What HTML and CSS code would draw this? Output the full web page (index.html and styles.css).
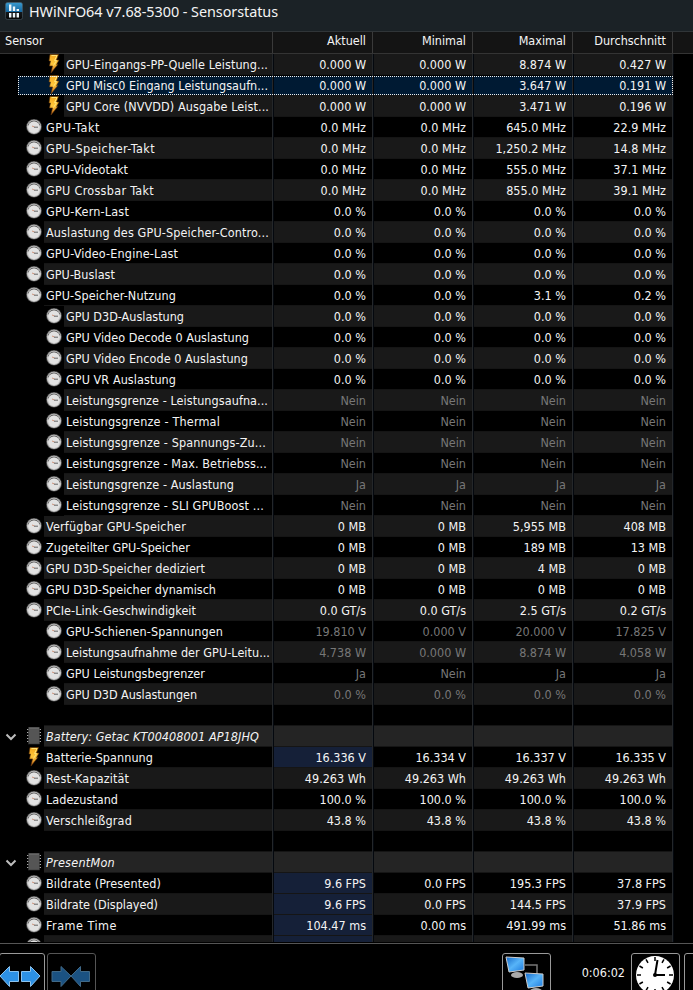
FILE: index.html
```html
<!DOCTYPE html>
<html lang="de">
<head>
<meta charset="utf-8">
<title>HWiNFO64 v7.68-5300 - Sensorstatus</title>
<link rel="stylesheet" href="styles.css">
</head>
<body>
<svg class="defs" width="0" height="0" aria-hidden="true">
  <defs>
    <linearGradient id="gold" x1="0" y1="0" x2="0" y2="1"><stop offset="0" stop-color="#f4a81c"/><stop offset=".5" stop-color="#ffc83c"/><stop offset="1" stop-color="#c8681c"/></linearGradient>
    <linearGradient id="screen" x1="0" y1="0" x2="1" y2="1"><stop offset="0" stop-color="#1568c8"/><stop offset=".5" stop-color="#57b4f8"/><stop offset="1" stop-color="#1c78dc"/></linearGradient>
    <linearGradient id="logo" x1="0" y1="0" x2="0" y2="1"><stop offset="0" stop-color="#3a9bd0"/><stop offset=".55" stop-color="#1467a0"/><stop offset=".56" stop-color="#15191c"/><stop offset="1" stop-color="#050505"/></linearGradient>
    <symbol id="bolt" viewBox="0 0 20 20"><path d="M6 0.500H14.500L12.500 6H15L12.500 10.500H13.800L7 19L8.500 12H5.500L6.500 7H5Z" fill="url(#gold)" stroke="#5c300a" stroke-width=".6"/><path d="M7.500 1.500H13L10.500 6.500H12.500L9.500 11.500" fill="none" stroke="#ffe478" stroke-width="1"/></symbol>
    <symbol id="gauge" viewBox="0 0 20 20"><circle cx="10" cy="9.800" r="7.800" fill="#555"/><circle cx="10" cy="9.800" r="7.100" fill="#c4c4c4"/><path d="M4.300 8.500A5.900 5.900 0 0 1 15.700 8.500" fill="none" stroke="#555" stroke-width="1"/><circle cx="10" cy="10.300" r="5.700" fill="#e2e2e2"/><path d="M8 9L10.500 10" stroke="#c98b72" stroke-width=".9"/><path d="M10 10.200H14" stroke="#666" stroke-width="1"/></symbol>
    <symbol id="chip" viewBox="0 0 20 20"><path d="M3 3.500H17M3 6.500H17M3 9.500H17M3 12.500H17M3 15.500H17" stroke="#aaa" stroke-width="1.200"/><rect x="4.500" y="1.500" width="11" height="16.500" fill="#555" stroke="#333" stroke-width=".6"/><path d="M5 2H15" stroke="#777" stroke-width="1"/></symbol>
    <symbol id="chevron" viewBox="0 0 12 8"><path d="M1.500 1.500L6 6L10.500 1.500" fill="none" stroke="#bdbdbd" stroke-width="2"/></symbol>
  </defs>
</svg>
<div class="window">
  <header class="titlebar">
    <svg class="logo" viewBox="0 0 18 18"><rect x=".5" y=".5" width="17" height="17" rx="2" fill="url(#logo)" stroke="#4b5c66" stroke-width=".6"/><path d="M5.200 2.500V9M9 4.500V9M12.800 7V9M5.200 11V15.500M9 11V15.500M12.800 11V15.500" stroke="#eef6fa" stroke-width="2.400"/></svg>
    <h1>HWiNFO64 v7.68-5300 - Sensorstatus</h1>
  </header>
  <div class="columns"><span>Sensor</span><span>Aktuell</span><span>Minimal</span><span>Maximal</span><span>Durchschnitt</span></div>
  <main class="rows" id="rows"></main>
  <footer class="toolbar">
    <div class="tool expand"><svg viewBox="0 0 44 40" width="44" height="40"><path d="M0 22L9.500 12.500V17.500H18.500V27.500H9.500V32.500ZM40 22L30.500 12.500V17.500H21.500V27.500H30.500V32.500Z" fill="#2d91e4" stroke="#8cc3ee"/></svg></div>
    <div class="tool collapse"><svg viewBox="0 0 44 40" width="44" height="40"><path d="M23 22L13 12.500V17.500H4V27.500H13V32.500ZM23 22L32.500 12.500V17.500H41.500V27.500H32.500V32.500Z" fill="#1b5282" stroke="#416987"/></svg></div>
    <div class="tool network"><svg viewBox="0 0 46 40" width="46" height="40"><path d="M22 11H34V21" fill="none" stroke="#777" stroke-width="1.500"/><ellipse cx="14" cy="21" rx="6" ry="3" fill="#aaa"/><path d="M3 3L21 4V16L6 18Z" fill="url(#screen)" stroke="#ccc"/><ellipse cx="33" cy="37" rx="6" ry="3" fill="#aaa"/><path d="M22 19L40 20V32L25 34Z" fill="url(#screen)" stroke="#ccc"/></svg></div>
    <time>0:06:02</time>
    <div class="tool clock"><svg viewBox="0 0 46 40" width="46" height="40"><circle cx="23" cy="21" r="19" fill="#fff"/><g id="ticks" stroke="#000" stroke-width="1.500"></g><path d="M23 21L25.500 6M22 21H33" stroke="#000" stroke-width="2"/><circle cx="23" cy="21" r="2"/></svg></div>
    <div class="tool next"></div>
  </footer>
</div>
<script src="app.js"></script>
</body>
</html>
```
FILE: styles.css
```css
* { box-sizing: border-box; }
body { margin: 0; background: #000; color: #f4f4f4; font: 12.5px/20px "DejaVu Sans Condensed", "DejaVu Sans", sans-serif; font-stretch: condensed; }
.defs { position: absolute; }
.window { width: 693px; height: 990px; overflow: hidden; display: flex; flex-direction: column; }
.titlebar { height: 32px; flex: none; display: flex; background: #1b2226; border-bottom: 1px solid #303538; padding: 2px 0 0 5px; }
.logo { width: 18px; height: 18px; margin-right: 6px; }
h1 { margin: 0; font: 14.4px/20px "Noto Sans", sans-serif; letter-spacing: -0.05px; white-space: nowrap; }
.columns { height: 22px; flex: none; display: grid; grid-template-columns: 273px repeat(4, 100px) 1fr; background: #141414; border-bottom: 1px solid #343434; line-height: 18px; }
.columns span { border-right: 1px solid #3a3a3a; padding-right: 6px; text-align: right; }
.columns span:first-child { text-align: left; padding-left: 5px; }
.rows { height: 888px; flex: none; overflow: hidden; }
.row { height: 21px; width: 674px; display: grid; grid-template-columns: 274px repeat(4, 100px); }
.row > * { border-right: 2px solid; border-image: linear-gradient(to right, transparent calc(100% - 2px), #24272a calc(100% - 2px), #24272a calc(100% - 1px), #04080e calc(100% - 1px)) 0 2 0 0; height: 21px; }
.name { display: flex; min-width: 0; padding-left: 24px; }
.nested .name { padding-left: 44px; }
.icon { width: 20px; height: 20px; flex: none; }
.label { flex: 1; min-width: 0; padding-left: 2px; white-space: nowrap; }
.label, .value { line-height: 21px; box-shadow: inset 0 -1px #151515; }
.value { text-align: right; padding-right: 6px; }
.stripe .label, .stripe .value { background: #191919; }
.muted .value { color: #777; }
.group .label, .group .value { background: #242424; }
.group .label { font-style: italic; }
.group .name { padding-left: 5px; }
.chevron { width: 12px; height: 8px; margin: 7px 7px 0 0; flex: none; }
.row.live .value:nth-child(2) { background: #152038; }
.selected { position: relative; background: linear-gradient(#001a33, #001a33) 18px 1px / 655px 19px no-repeat; }
.selected::after { content: ""; box-sizing: border-box; position: absolute; left: 18px; top: 1px; width: 655px; height: 19px; border: 1px dotted #eee; }
.toolbar { height: 48px; flex: none; border-top: 1px solid #555; margin-top: 1px; padding-top: 9px; display: flex; }
.tool { height: 50px; flex: none; border: 1px solid #999; border-radius: 3px; background: #000; overflow: hidden; }
.expand { width: 46px; margin-left: -1px; }
.collapse { width: 49px; margin-left: 2px; border-color: #555; }
.network { width: 49px; margin-left: 406px; }
time { flex: none; width: 80px; text-align: right; padding-right: 6px; line-height: 39px; }
.clock { width: 49px; }
.next { width: 49px; margin-left: 4px; }
```
FILE: app.js
```js
// icon, level, label, label width, values, kind
const rows = [
  ["bolt", 1, "GPU-Eingangs-PP-Quelle Leistung...", 202, "0.000 W|0.000 W|8.874 W|0.427 W"],
  ["bolt", 1, "GPU Misc0 Eingang Leistungsaufn...", 202, "0.000 W|0.000 W|3.647 W|0.191 W", "selected"],
  ["bolt", 1, "GPU Core (NVVDD) Ausgabe Leist...", 203, "0.000 W|0.000 W|3.471 W|0.196 W"],
  ["gauge", 0, "GPU-Takt", 54, "0.0 MHz|0.0 MHz|645.0 MHz|22.9 MHz"],
  ["gauge", 0, "GPU-Speicher-Takt", 109, "0.0 MHz|0.0 MHz|1,250.2 MHz|14.8 MHz"],
  ["gauge", 0, "GPU-Videotakt", 82, "0.0 MHz|0.0 MHz|555.0 MHz|37.1 MHz"],
  ["gauge", 0, "GPU Crossbar Takt", 108, "0.0 MHz|0.0 MHz|855.0 MHz|39.1 MHz"],
  ["gauge", 0, "GPU-Kern-Last", 83, "0.0 %|0.0 %|0.0 %|0.0 %"],
  ["gauge", 0, "Auslastung des GPU-Speicher-Contro...", 223, "0.0 %|0.0 %|0.0 %|0.0 %"],
  ["gauge", 0, "GPU-Video-Engine-Last", 132, "0.0 %|0.0 %|0.0 %|0.0 %"],
  ["gauge", 0, "GPU-Buslast", 69, "0.0 %|0.0 %|0.0 %|0.0 %"],
  ["gauge", 0, "GPU-Speicher-Nutzung", 130, "0.0 %|0.0 %|3.1 %|0.2 %"],
  ["gauge", 1, "GPU D3D-Auslastung", 118, "0.0 %|0.0 %|0.0 %|0.0 %"],
  ["gauge", 1, "GPU Video Decode 0 Auslastung", 183, "0.0 %|0.0 %|0.0 %|0.0 %"],
  ["gauge", 1, "GPU Video Encode 0 Auslastung", 182, "0.0 %|0.0 %|0.0 %|0.0 %"],
  ["gauge", 1, "GPU VR Auslastung", 110, "0.0 %|0.0 %|0.0 %|0.0 %"],
  ["gauge", 1, "Leistungsgrenze - Leistungsaufna...", 202, "Nein|Nein|Nein|Nein", "muted"],
  ["gauge", 1, "Leistungsgrenze - Thermal", 154, "Nein|Nein|Nein|Nein", "muted"],
  ["gauge", 1, "Leistungsgrenze - Spannungs-Zu...", 200, "Nein|Nein|Nein|Nein", "muted"],
  ["gauge", 1, "Leistungsgrenze - Max. Betriebss...", 201, "Nein|Nein|Nein|Nein", "muted"],
  ["gauge", 1, "Leistungsgrenze - Auslastung", 168, "Ja|Ja|Ja|Ja", "muted"],
  ["gauge", 1, "Leistungsgrenze - SLI GPUBoost ...", 198, "Nein|Nein|Nein|Nein", "muted"],
  ["gauge", 0, "Verfügbar GPU-Speicher", 140, "0 MB|0 MB|5,955 MB|408 MB"],
  ["gauge", 0, "Zugeteilter GPU-Speicher", 144, "0 MB|0 MB|189 MB|13 MB"],
  ["gauge", 0, "GPU D3D-Speicher dediziert", 159, "0 MB|0 MB|4 MB|0 MB"],
  ["gauge", 0, "GPU D3D-Speicher dynamisch", 170, "0 MB|0 MB|0 MB|0 MB"],
  ["gauge", 0, "PCIe-Link-Geschwindigkeit", 150, "0.0 GT/s|0.0 GT/s|2.5 GT/s|0.2 GT/s"],
  ["gauge", 1, "GPU-Schienen-Spannungen", 157, "19.810 V|0.000 V|20.000 V|17.825 V", "muted"],
  ["gauge", 1, "Leistungsaufnahme der GPU-Leitu...", 204, "4.738 W|0.000 W|8.874 W|4.058 W", "muted"],
  ["gauge", 1, "GPU Leistungsbegrenzer", 139, "Ja|Nein|Ja|Ja", "muted"],
  ["gauge", 1, "GPU D3D Auslastungen", 131, "0.0 %|0.0 %|0.0 %|0.0 %", "muted"],
  ["", 0, "", 0, "|||", "spacer"],
  ["chip", 0, "Battery: Getac KT00408001 AP18JHQ", 213, "|||", "group"],
  ["bolt", 0, "Batterie-Spannung", 107, "16.336 V|16.334 V|16.337 V|16.335 V", "live"],
  ["gauge", 0, "Rest-Kapazität", 83, "49.263 Wh|49.263 Wh|49.263 Wh|49.263 Wh"],
  ["gauge", 0, "Ladezustand", 72, "100.0 %|100.0 %|100.0 %|100.0 %"],
  ["gauge", 0, "Verschleißgrad", 86, "43.8 %|43.8 %|43.8 %|43.8 %"],
  ["", 0, "", 0, "|||", "spacer"],
  ["chip", 0, "PresentMon", 69, "|||", "group"],
  ["gauge", 0, "Bildrate (Presented)", 115, "9.6 FPS|0.0 FPS|195.3 FPS|37.8 FPS", "live"],
  ["gauge", 0, "Bildrate (Displayed)", 112, "9.6 FPS|0.0 FPS|144.5 FPS|37.9 FPS", "live"],
  ["gauge", 0, "Frame Time", 71, "104.47 ms|0.00 ms|491.99 ms|51.86 ms", "live"],
  ["gauge", 0, "", 0, "|||", "live"]
];
document.getElementById("rows").innerHTML = rows.map(([icon, level, label, width, values, kind = ""], i) => {
  const stripe = i % 2 === 0 && kind !== "group" ? "stripe" : "";
  const chevron = kind === "group" ? '<svg class="chevron"><use href="#chevron"/></svg>' : "";
  return `<div class="row ${kind} ${stripe} ${level ? "nested" : ""}"><div class="name">${chevron}<svg class="icon">${icon ? `<use href="#${icon}"/>` : ""}</svg><div class="label"><span data-width="${width}">${label}</span></div></div>${values.split("|").map(v => `<div class="value">${v}</div>`).join("")}</div>`;
}).join("");
document.querySelectorAll("[data-width]").forEach(el => {
  const n = el.textContent.length;
  if (n) el.style.letterSpacing = `${(Number(el.dataset.width) - el.getBoundingClientRect().width) / n}px`;
});
document.getElementById("ticks").innerHTML = Array.from({ length: 12 }, (_, i) => `<path d="M23 3V7" transform="rotate(${i * 30} 23 21)"/>`).join("");
```
